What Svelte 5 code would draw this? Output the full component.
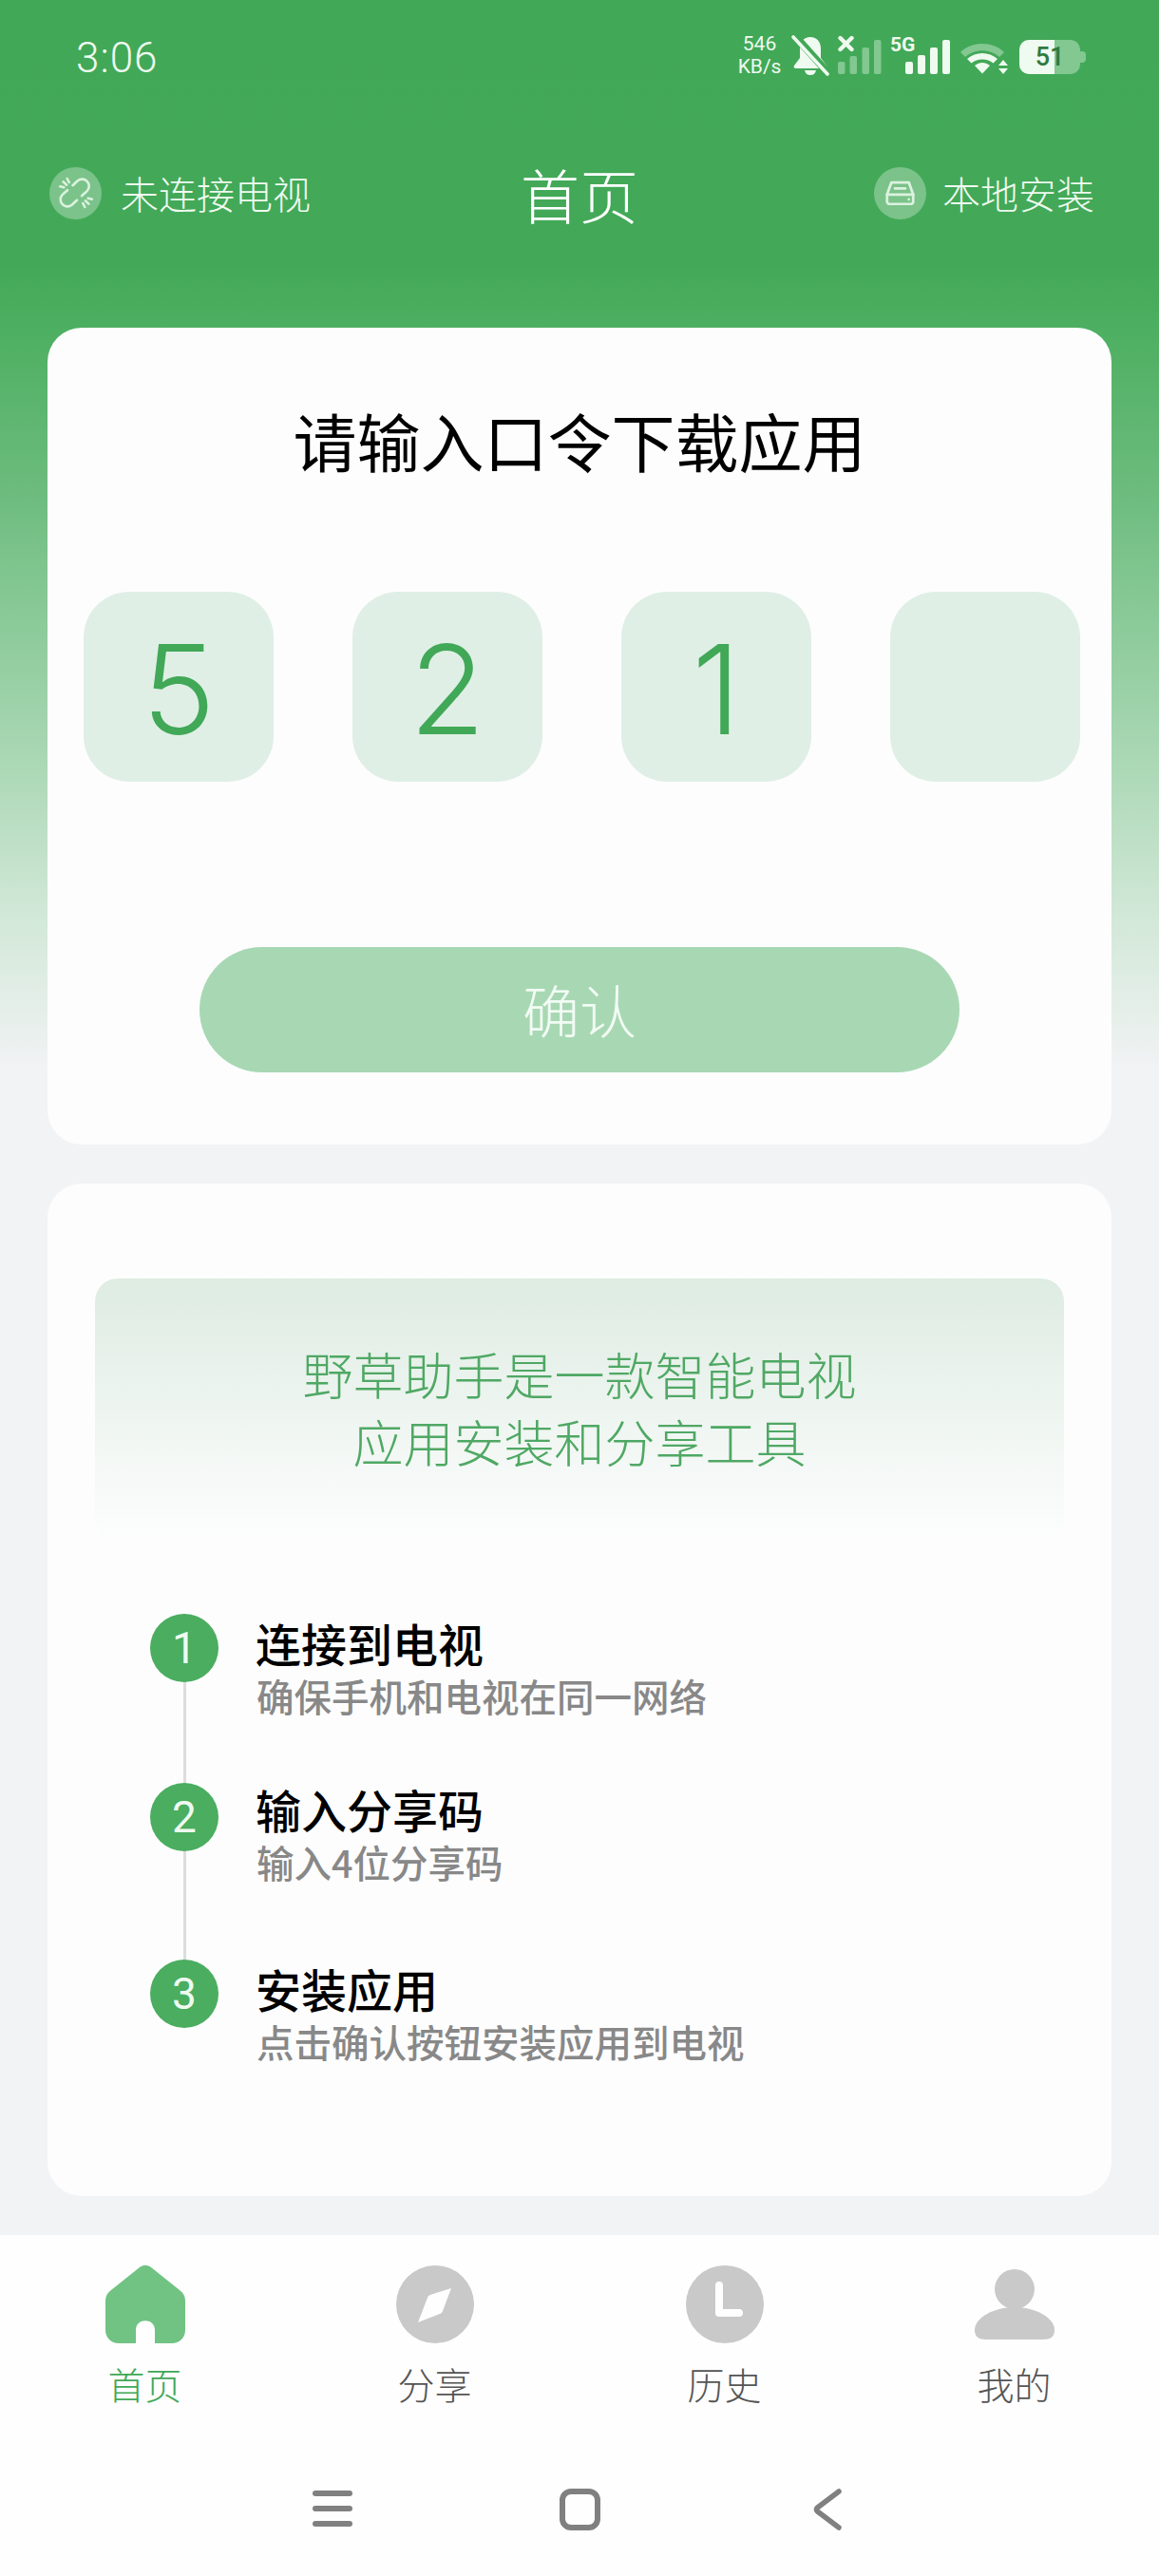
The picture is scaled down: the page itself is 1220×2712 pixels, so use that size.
<script>
  const digits = ["5", "2", "1", ""];
  const steps = [
    { num: 1, title: "连接到电视", desc: "确保手机和电视在同一网络" },
    { num: 2, title: "输入分享码", desc: "输入4位分享码" },
    { num: 3, title: "安装应用", desc: "点击确认按钮安装应用到电视" }
  ];
  const tabs = [
    { key: "home", label: "首页" },
    { key: "share", label: "分享" },
    { key: "history", label: "历史" },
    { key: "me", label: "我的" }
  ];
</script>

<div class="page">
  <div class="status-bar">
    <span class="time">3:06</span>
    <div class="status-icons">
      <div class="speed"><span>546</span><span>KB/s</span></div>
      <svg class="ic-bell" width="40" height="44" viewBox="0 0 40 44">
        <path d="M20 3c7 0 11 5 11 12v10l6 8c1 2 0 3-2 3H5c-2 0-3-1-2-3l6-8V15C9 8 13 3 20 3z" fill="#effaf0" />
        <path d="M14 38h12c-1 4-3 5-6 5s-5-1-6-5z" fill="#effaf0" />
        <path d="M3 1 39 41" stroke="#41a857" stroke-width="8" />
        <path d="M2 3 38 42" stroke="#effaf0" stroke-width="3.6" stroke-linecap="round" />
      </svg>
      <svg class="ic-sig1" width="46" height="42" viewBox="0 0 46 42">
        <g fill="#effaf0" fill-opacity="0.38">
          <rect x="0" y="29" width="7.5" height="13" rx="2" />
          <rect x="12.500" y="23" width="7.5" height="19" rx="2" />
          <rect x="25.500" y="14" width="7.5" height="28" rx="2" />
          <rect x="38" y="6" width="7.5" height="36" rx="2" />
        </g>
        <path d="M2.500 4 14.500 16M14.500 4 2.500 16" stroke="#effaf0" stroke-width="4.400" stroke-linecap="round" />
      </svg>
      <div class="sig2">
        <span class="five-g">5G</span>
        <svg width="47" height="38" viewBox="0 0 47 38">
          <g fill="#effaf0">
            <rect x="0" y="25" width="8" height="13" rx="2" />
            <rect x="13" y="18" width="8" height="20" rx="2" />
            <rect x="26" y="10" width="8" height="28" rx="2" />
            <rect x="39" y="2" width="8" height="36" rx="2" />
          </g>
        </svg>
      </div>
      <svg class="ic-wifi" width="52" height="34" viewBox="0 0 52 34">
        <path d="M1 11C13 -1 35 -1 47 11l-5 5C32 7 16 7 6 16z" fill="#effaf0" fill-opacity="0.38" />
        <path d="M8 18c9-8 23-8 32 0l-4.500 4.500c-6.500-5.500-16.500-5.500-23 0z" fill="#effaf0" />
        <path d="M16 25c5-4 11-4 16 0l-8 8.500z" fill="#effaf0" />
        <path d="M46 19l5 6h-10zM46 34l5-6h-10z" fill="#effaf0" />
      </svg>
      <div class="battery">
        <div class="batt-fill"></div>
        <span class="batt-num">51</span>
        <div class="batt-cap"></div>
      </div>
    </div>
  </div>

  <header class="top-bar">
    <div class="top-side">
      <span class="top-ic">
        <svg width="36" height="38" viewBox="0 0 36 38" fill="none" stroke="#dcf2df" stroke-width="2.600" stroke-linecap="round">
          <path d="M14.500 11.200 19.800 6.300A7.300 7.300 0 0 1 29.600 17.100L24 22.200" />
          <path d="M19 26.700 13.600 31.700A7.300 7.300 0 0 1 3.800 20.900L9 16.200" />
          <path d="M1.300 12.300l4 1M4.700 7.300l3.300 3.400M8.700 4l2 4M34.700 25.700l-4-1M31.300 30.700l-3.300-3.400M27.300 34l-2-4" />
        </svg>
      </span>
      <span class="top-text">未连接电视</span>
    </div>
    <h1 class="page-title">首页</h1>
    <div class="top-side right">
      <span class="top-ic">
        <svg width="33" height="26" viewBox="0 0 36 28" fill="none" stroke="#dcf2df" stroke-width="3" stroke-linejoin="round">
          <path d="M8 2h20l5 14v8a3 3 0 0 1-3 3H6a3 3 0 0 1-3-3v-8z" />
          <path d="M3 16h30M12 9h12" stroke-linecap="round" />
          <circle cx="28" cy="21.500" r="1.500" fill="#dcf2df" stroke="none" />
        </svg>
      </span>
      <span class="top-text">本地安装</span>
    </div>
  </header>

  <main class="content">
    <section class="card code-card">
      <h2 class="code-title">请输入口令下载应用</h2>
      <div class="code-boxes">
        {#each digits as d}
          <div class="code-box">{d}</div>
        {/each}
      </div>
      <button class="confirm" type="button">确认</button>
    </section>

    <section class="card help-card">
      <div class="intro">
        <p>野草助手是一款智能电视</p>
        <p>应用安装和分享工具</p>
      </div>
      <ol class="steps">
        {#each steps as step, i}
          <li class="step">
            <div class="marker">
              <span class="num">{step.num}</span>
              {#if i < steps.length - 1}
                <span class="line"></span>
              {/if}
            </div>
            <div class="step-text">
              <div class="step-title">{step.title}</div>
              <div class="step-desc">{step.desc}</div>
            </div>
          </li>
        {/each}
      </ol>
    </section>
  </main>

  <nav class="tabs">
    {#each tabs as tab, i}
      <div class="tab" class:active={i === 0}>
        <div class="tab-icon">
          {#if tab.key === "home"}
            <svg width="84" height="82" viewBox="0 0 84 82">
              <path fill="#70c382" d="M36 2c3.500-2.600 8.500-2.600 12 0l30 24c4 3 6 6.500 6 12v30c0 8-6 14-14 14H52V68c0-13-20-13-20 0v14H14C6 82 0 76 0 68V38c0-5.500 2-9 6-12z" />
            </svg>
          {:else if tab.key === "share"}
            <svg width="82" height="82" viewBox="0 0 82 82">
              <path fill="#c9c9c9" fill-rule="evenodd" d="M41 0a41 41 0 1 1 0 82a41 41 0 0 1 0-82zM58 24 36 31c-1.500.5-2.500 1.500-3 3L23 60l23-9c1.500-.6 2.500-1.500 3-3z" />
            </svg>
          {:else if tab.key === "history"}
            <svg width="82" height="82" viewBox="0 0 82 82">
              <circle cx="41" cy="41" r="41" fill="#c9c9c9" />
              <path d="M35 21v29h21" fill="none" stroke="#fff" stroke-width="8" stroke-linecap="round" stroke-linejoin="round" />
            </svg>
          {:else}
            <svg class="person" width="84" height="74" viewBox="0 0 84 74">
              <ellipse cx="42" cy="21" rx="21" ry="21" fill="#c9c9c9" />
              <path d="M42 40c-22 0-42 11-42 24 0 7 4 10 12 10h60c8 0 12-3 12-10 0-13-20-24-42-24z" fill="#c9c9c9" />
            </svg>
          {/if}
        </div>
        <span class="tab-label">{tab.label}</span>
      </div>
    {/each}
  </nav>

  <div class="sys-nav">
    <svg class="sys-menu" width="42" height="38" viewBox="0 0 42 38">
      <g fill="#808080">
        <rect x="0" y="0" width="42" height="6" rx="3" />
        <rect x="0" y="16" width="42" height="6" rx="3" />
        <rect x="0" y="32" width="42" height="6" rx="3" />
      </g>
    </svg>
    <svg class="sys-home" width="43" height="44" viewBox="0 0 43 44">
      <rect x="3" y="3" width="37" height="38" rx="9" fill="none" stroke="#808080" stroke-width="6" />
    </svg>
    <svg width="30" height="44" viewBox="0 0 30 44">
      <path d="M27 3 4.500 20c-1.500 1.200-1.500 2.800 0 4L27 41" fill="none" stroke="#808080" stroke-width="5.500" stroke-linecap="round" stroke-linejoin="round" />
    </svg>
  </div>
</div>

<style>
  :global(body) {
    margin: 0;
    background: #f2f3f5;
  }

  .page {
    width: 1220px;
    height: 2712px;
    display: flex;
    flex-direction: column;
    overflow: hidden;
    background: linear-gradient(180deg, #41a857 0, #43a958 280px, #4daf61 346px, #6dbc7e 520px, #84c793 623px, #abd8b5 804px, #d2e8d8 967px, #f2f3f5 1130px);
    font-family: "Noto Sans CJK SC", "Noto Sans", sans-serif;
  }

  .status-bar {
    height: 120px;
    box-sizing: border-box;
    padding: 0 77px 0 80px;
    display: flex;
    justify-content: space-between;
    align-items: flex-start;
    color: #effaf0;
  }

  .time {
    margin-top: 34px;
    font: 300 44px/54px Roboto, sans-serif;
    letter-spacing: 1px;
  }

  .status-icons {
    margin-top: 36px;
    display: flex;
    align-items: flex-start;
  }

  .speed {
    width: 41px;
    margin: -2px 13px 0 0;
    display: flex;
    flex-direction: column;
    align-items: center;
    font: 400 21px/24px Roboto, sans-serif;
    white-space: nowrap;
  }

  .ic-bell {
    margin-right: 9px;
  }

  .ic-sig1 {
    margin-right: 9px;
  }

  .sig2 {
    width: 63px;
    height: 42px;
    position: relative;
    margin-right: 10px;
  }

  .sig2 svg {
    position: absolute;
    right: 0;
    top: 4px;
  }

  .five-g {
    position: absolute;
    left: 0;
    top: 1px;
    font: 700 21px/20px Roboto, sans-serif;
  }

  .ic-wifi {
    margin: 8px 11px 0 0;
  }

  .battery {
    margin: 6px 6px 0 0;
    width: 64px;
    height: 36px;
    position: relative;
    border-radius: 10px;
    background: rgba(239, 250, 240, 0.38);
  }

  .batt-fill {
    width: 37px;
    height: 36px;
    border-radius: 10px 0 0 10px;
    background: #effaf0;
  }

  .batt-num {
    position: absolute;
    left: 0;
    right: 0;
    top: 0;
    text-align: center;
    font: 500 27px/36px Roboto, sans-serif;
    color: #2f7a41;
  }

  .batt-cap {
    position: absolute;
    right: -6px;
    top: 12px;
    width: 6px;
    height: 12px;
    border-radius: 0 4px 4px 0;
    background: rgba(239, 250, 240, 0.38);
  }

  .top-bar {
    height: 170px;
    box-sizing: border-box;
    padding: 55px 68px 0 52px;
    display: flex;
    justify-content: space-between;
    align-items: flex-start;
    position: relative;
    color: #effaf0;
  }

  .top-side {
    display: flex;
    align-items: center;
    gap: 20px;
  }

  .top-side.right {
    gap: 17px;
  }

  .top-ic {
    width: 55px;
    height: 55px;
    border-radius: 50%;
    display: flex;
    align-items: center;
    justify-content: center;
    background: rgba(255, 255, 255, 0.3);
  }

  .top-text {
    font-size: 40px;
    line-height: 56px;
    font-weight: 300;
  }

  .page-title {
    position: absolute;
    left: 0;
    right: 0;
    top: 44px;
    margin: 0;
    text-align: center;
    font-size: 62px;
    line-height: 80px;
    font-weight: 300;
    color: #fff;
  }

  .content {
    flex: 1;
    display: flex;
    flex-direction: column;
    gap: 41px;
    padding: 55px 50px 0;
  }

  .card {
    background: #fdfdfe;
    border-radius: 36px;
  }

  .code-card {
    height: 860px;
    box-sizing: border-box;
    display: flex;
    flex-direction: column;
    align-items: center;
  }

  .code-title {
    margin: 69px 0 0;
    font-size: 67px;
    line-height: 98px;
    font-weight: 400;
    color: #000;
  }

  .code-boxes {
    margin-top: 111px;
    display: flex;
    gap: 83px;
    margin-left: 5px;
  }

  .code-box {
    width: 200px;
    height: 200px;
    box-sizing: border-box;
    padding-top: 6px;
    border-radius: 48px;
    background: #dfefe6;
    display: flex;
    align-items: center;
    justify-content: center;
    font: 300 130px/1 Inter, sans-serif;
    color: #41a857;
  }

  .confirm {
    margin-top: 174px;
    width: 800px;
    height: 132px;
    border: 0;
    border-radius: 66px;
    background: #a8d8b3;
    color: #f2fbf4;
    font-family: inherit;
    font-size: 60px;
    line-height: 80px;
    padding: 0 0 3px;
    font-weight: 300;
  }

  .help-card {
    height: 1066px;
    box-sizing: border-box;
    padding: 100px 50px 0;
  }

  .intro {
    height: 277px;
    box-sizing: border-box;
    padding-top: 65px;
    border-radius: 24px;
    background: linear-gradient(180deg, #deece2 0%, #fdfdfe 100%);
    text-align: center;
    color: #4fa864;
    font-size: 53px;
    line-height: 71px;
    font-weight: 300;
  }

  .intro p {
    margin: 0;
  }

  .steps {
    list-style: none;
    margin: 76px 0 0;
    padding: 0 0 0 58px;
  }

  .step {
    display: flex;
    gap: 39px;
    height: 178px;
  }

  .step:nth-child(2) {
    height: 186px;
  }

  .step:nth-child(2) .step-text {
    margin-top: -3px;
  }

  .marker {
    width: 72px;
    display: flex;
    flex-direction: column;
    align-items: center;
  }

  .num {
    flex: none;
    width: 72px;
    height: 72px;
    border-radius: 50%;
    background: #4aad5f;
    color: #effaf0;
    display: flex;
    align-items: center;
    justify-content: center;
    font: 400 46px/1 Roboto, sans-serif;
  }

  .line {
    flex: 1;
    width: 3px;
    background: #dcdcdc;
  }

  .step-title {
    padding-top: 2px;
    font-size: 48px;
    line-height: 56px;
    font-weight: 500;
    color: #000;
  }

  .step-desc {
    margin: 4px 0 0 1px;
    font-size: 39.500px;
    line-height: 48px;
    font-weight: 500;
    color: #888;
  }

  .tabs {
    height: 225px;
    box-sizing: border-box;
    display: grid;
    grid-template-columns: repeat(4, 1fr);
    padding-top: 32px;
    background: #fefefe;
  }

  .tab {
    display: flex;
    flex-direction: column;
    align-items: center;
    color: #555;
  }

  .tab-icon {
    height: 82px;
    display: flex;
    align-items: flex-start;
  }

  .person {
    margin-top: 4px;
  }

  .tab.active {
    color: #41a857;
  }

  .tab-label {
    margin-top: 14px;
    font-size: 39px;
    line-height: 56px;
    font-weight: 300;
  }

  .sys-nav {
    height: 134px;
    box-sizing: border-box;
    padding: 42px 0 0 329px;
    display: flex;
    align-items: flex-start;
    background: #fefefe;
  }

  .sys-menu {
    margin: 2px 218px 0 0;
  }

  .sys-home {
    margin-right: 224px;
  }
</style>
